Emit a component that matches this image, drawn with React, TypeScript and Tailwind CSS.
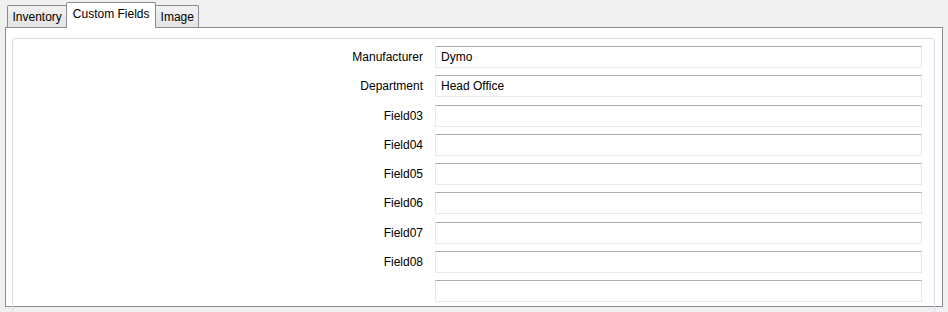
import React from 'react'

const fields: { label: string; value: string }[] = [
  { label: 'Manufacturer', value: 'Dymo' },
  { label: 'Department',   value: 'Head Office' },
  { label: 'Field03',      value: '' },
  { label: 'Field04',      value: '' },
  { label: 'Field05',      value: '' },
  { label: 'Field06',      value: '' },
  { label: 'Field07',      value: '' },
  { label: 'Field08',      value: '' },
  { label: '',             value: '' },
]

function Tab({ label, active }: { label: string; active?: boolean }) {
  if (active) {
    return (
      <div className="relative z-10 -mb-px h-[26px] px-[5.5px] pt-[4px] bg-white border border-b-0 border-[#898c95] rounded-t-[2px] -mx-px">
        {label}
      </div>
    )
  }
  return (
    <div className="h-[22px] px-[4.5px] pt-[4px] bg-gradient-to-b from-[#f2f2f2] to-[#e3e3e3] border border-b-0 border-[#898c95] rounded-t-[2px]">
      {label}
    </div>
  )
}

export default function App() {
  return (
    <div
      className="w-[948px] h-[312px] overflow-hidden bg-[#f0f0f0] text-[12px] leading-[14px] text-black"
      style={{ fontFamily: '"Liberation Sans", Arial, sans-serif' }}
    >
      {/* Tab strip */}
      <div className="flex items-end h-[27px] pl-[7px]">
        <Tab label="Inventory" />
        <Tab label="Custom Fields" active />
        <Tab label="Image" />
      </div>

      {/* Tab page */}
      <div className="ml-[5px] w-[938px] h-[280px] bg-white border border-[#898c95]">
        <div className="ml-[6px] mt-[10px] w-[923px] h-[300px] border border-[#d5dfe5] rounded-[3px] pt-[7px] pr-[12px]">
          <div className="grid grid-cols-[1fr_487px] gap-x-[12px] gap-y-[7.3px]">
            {fields.map((f, i) => (
              <React.Fragment key={i}>
                <div className="h-[22px] flex items-center justify-end">{f.label}</div>
                <div className="h-[22px] flex items-center pl-[5px] border border-[#e3e9ef] border-t-[#abadb3] bg-white">
                  {f.value}
                </div>
              </React.Fragment>
            ))}
          </div>
        </div>
      </div>
    </div>
  )
}
